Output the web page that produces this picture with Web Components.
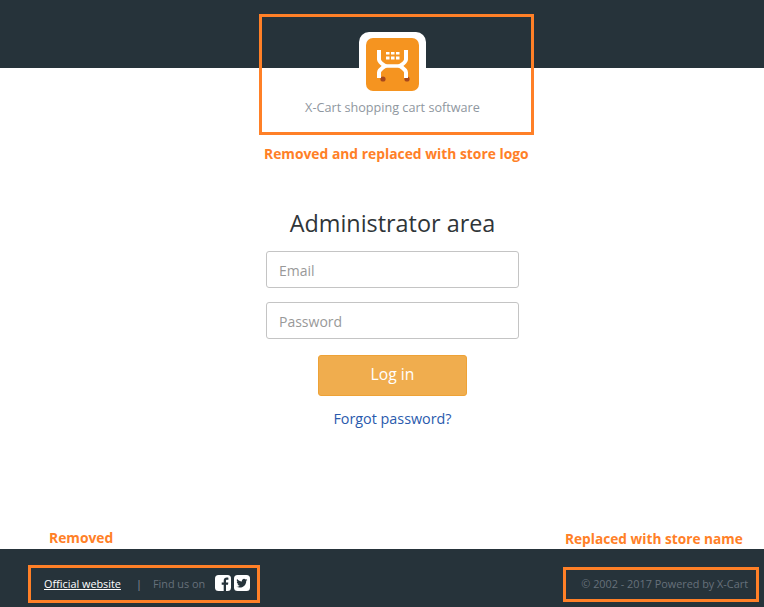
<!DOCTYPE html>
<html>
<head>
<meta charset="utf-8">
<style>
  html, body { margin: 0; padding: 0; background: #fff; }
  body { width: 764px; height: 607px; overflow: hidden; font-family: "Open Sans", sans-serif; }
</style>
</head>
<body>
<admin-page></admin-page>
<script>
class NoteFrame extends HTMLElement {
  constructor() {
    super();
    this.attachShadow({ mode: 'open' });
    this.shadowRoot.innerHTML = `
      <style>
        :host { display: block; position: absolute; box-sizing: border-box; border: 3px solid #ff8027; pointer-events: none; }
      </style>`;
  }
}
customElements.define('note-frame', NoteFrame);

class NoteLabel extends HTMLElement {
  constructor() {
    super();
    this.attachShadow({ mode: 'open' });
    this.shadowRoot.innerHTML = `
      <style>
        :host { display: block; position: absolute; color: #ff8027; font: bold 13.850px/18px "Open Sans", sans-serif; white-space: nowrap; }
      </style>
      <slot></slot>`;
  }
}
customElements.define('note-label', NoteLabel);

class CartLogo extends HTMLElement {
  constructor() {
    super();
    this.attachShadow({ mode: 'open' });
    this.shadowRoot.innerHTML = `
      <style>
        :host { display: flex; flex-direction: column; align-items: center; margin-top: -36px; }
        .plate { background: #fff; border-radius: 10px 10px 0 0; padding: 6px 7px 0; width: 53px; height: 53px; }
        .icon { display: block; width: 53px; height: 53px; }
        .name { margin-top: 7px; font-size: 12.650px; line-height: 18px; color: #8f97a0; }
      </style>
      <div class="plate">
        <svg class="icon" viewBox="0 0 53 53">
          <rect width="53" height="53" rx="7" fill="#f59420"/>
          <circle cx="17" cy="41" r="2.600" fill="#a8481c"/>
          <circle cx="41" cy="41" r="2.600" fill="#a8481c"/>
          <path d="M13 12v9.500c0 2.500 3 4.500 6 6.500-3 2-6 4-6 6.500V40M40 12v9.500c0 2.500-3 4.500-6 6.500 3 2 6 4 6 6.500V40" fill="none" stroke="#fff" stroke-width="4"/>
          <path d="M19 28h15" fill="none" stroke="#fff" stroke-width="3.500"/>
          <g fill="#fff">
            <rect x="20" y="14" width="3.500" height="2.500"/><rect x="25" y="14" width="3.500" height="2.500"/><rect x="30" y="14" width="3.500" height="2.500"/>
            <rect x="20" y="18.500" width="3.500" height="3"/><rect x="25" y="18.500" width="3.500" height="3"/><rect x="30" y="18.500" width="3.500" height="3"/>
          </g>
        </svg>
      </div>
      <div class="name"><slot></slot></div>`;
  }
}
customElements.define('cart-logo', CartLogo);

class LoginField extends HTMLElement {
  constructor() {
    super();
    this.attachShadow({ mode: 'open' });
    this.shadowRoot.innerHTML = `
      <style>
        :host { display: block; }
        .box {
          box-sizing: border-box; width: 253px; height: 37px; padding: 2px 12px 0;
          display: flex; align-items: center;
          border: 1px solid #c4c4c4; border-radius: 3px; background: #fff;
          color: #999; font-size: 14px;
        }
      </style>
      <div class="box"><slot></slot></div>`;
  }
}
customElements.define('login-field', LoginField);

class LoginForm extends HTMLElement {
  constructor() {
    super();
    this.attachShadow({ mode: 'open' });
    this.shadowRoot.innerHTML = `
      <style>
        :host { display: flex; flex-direction: column; align-items: center; margin-top: 91px; }
        h1 { margin: 0 0 11px; font-size: 23.400px; line-height: 33px; font-weight: 400; color: #2f3538; }
        .fields { display: flex; flex-direction: column; gap: 14px; }
        .btn {
          box-sizing: border-box; width: 149px; height: 41px; margin-top: 16px; padding-bottom: 3px;
          display: flex; align-items: center; justify-content: center;
          background: #f0ad4e; border: 1px solid #eea236; border-radius: 3px;
          color: #fff; font-size: 15.700px;
        }
        a { margin-top: 13px; font-size: 14.350px; line-height: 20px; color: #2a5aad; text-decoration: none; }
      </style>
      <h1>Administrator area</h1>
      <div class="fields">
        <login-field>Email</login-field>
        <login-field>Password</login-field>
      </div>
      <div class="btn">Log in</div>
      <a href="#">Forgot password?</a>`;
  }
}
customElements.define('login-form', LoginForm);

class SiteFooter extends HTMLElement {
  constructor() {
    super();
    this.attachShadow({ mode: 'open' });
    this.shadowRoot.innerHTML = `
      <style>
        :host {
          display: flex; justify-content: space-between; align-items: center;
          height: 58px; box-sizing: border-box; padding: 11px 16px 0 44px;
          background: #26333a; font-size: 10.850px; color: #66717b;
        }
        .left { display: flex; align-items: center; }
        a { color: #fff; text-decoration: underline; }
        .sep { margin: 0 11px 0 15px; color: #8a939a; }
        .social { display: flex; gap: 3px; margin-left: 10px; margin-top: -2px; }
        svg { display: block; width: 16px; height: 16px; }
        .copy { color: #66717b; }
      </style>
      <div class="left">
        <a href="#">Official website</a>
        <span class="sep">|</span>
        <span>Find us on</span>
        <span class="social">
          <svg viewBox="0 0 16 16"><rect width="16" height="16" rx="3.500" fill="#fff"/><path d="M11 16V9.800h2l.3-2.400H11V6c0-.7.200-1.200 1.200-1.200h1.200V2.700C13.100 2.600 12.500 2.600 11.800 2.600 10 2.600 8.700 3.700 8.700 5.700v1.700H6.700v2.400h2V16z" fill="#26333a"/></svg>
          <svg viewBox="0 0 16 16"><rect width="16" height="16" rx="3.500" fill="#fff"/><path d="M13.400 4.900c-.4.200-.8.300-1.300.4.500-.3.800-.7 1-1.200-.4.300-.9.400-1.400.5-.9-1-2.400-1-3.200-.1-.6.600-.8 1.400-.6 2.100C6.100 6.500 4.300 5.600 3.100 4.100c-.6 1-.3 2.400.7 3-.4 0-.7-.1-1-.3 0 1.100.8 2.100 1.800 2.300-.3.100-.7.100-1 0 .3.900 1.100 1.600 2.100 1.600-.9.700-2.100 1.100-3.300.9 1 .700 2.200 1 3.400 1 4.200 0 6.500-3.500 6.400-6.600.5-.3.900-.7 1.200-1.100z" fill="#26333a"/></svg>
        </span>
      </div>
      <div class="copy"><slot></slot></div>`;
  }
}
customElements.define('site-footer', SiteFooter);

class AdminPage extends HTMLElement {
  constructor() {
    super();
    this.attachShadow({ mode: 'open' });
    this.shadowRoot.innerHTML = `
      <style>
        :host { display: flex; flex-direction: column; position: relative; width: 764px; height: 607px; }
        .bar { height: 68px; flex: none; background: #26333a; }
        main { flex: 1; display: flex; flex-direction: column; align-items: center; padding-left: 21px; }
      </style>
      <div class="bar"></div>
      <main>
        <cart-logo>X-Cart shopping cart software</cart-logo>
        <login-form></login-form>
      </main>
      <site-footer>© 2002 - 2017 Powered by X-Cart</site-footer>
      <note-frame style="left:259px;top:14px;width:275px;height:121px"></note-frame>
      <note-label style="left:264px;top:145px">Removed and replaced with store logo</note-label>
      <note-label style="left:49px;top:529px">Removed</note-label>
      <note-label style="left:565px;top:530px;font-size:13.700px">Replaced with store name</note-label>
      <note-frame style="left:28px;top:565px;width:232px;height:38px"></note-frame>
      <note-frame style="left:563px;top:567px;width:196px;height:35px"></note-frame>`;
  }
}
customElements.define('admin-page', AdminPage);
</script>
</body>
</html>
